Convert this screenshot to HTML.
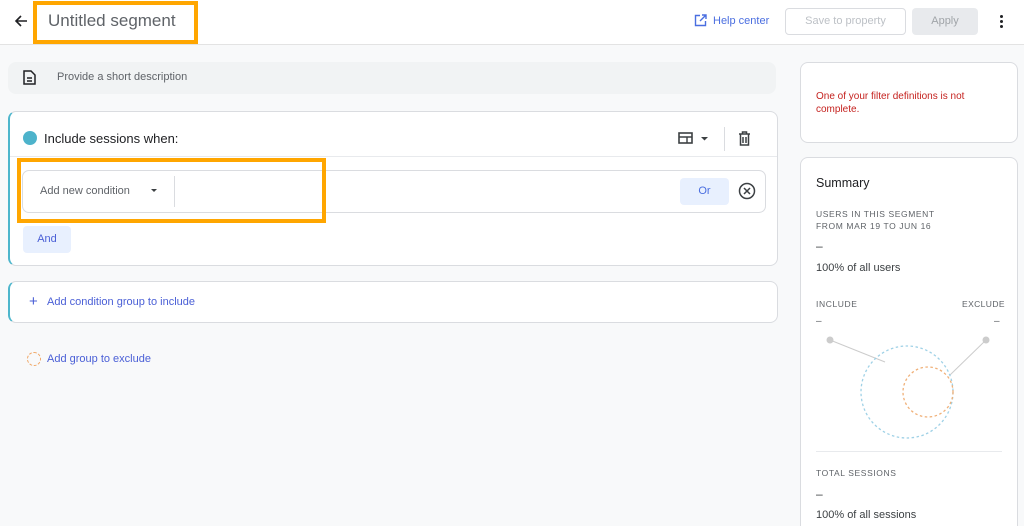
<!DOCTYPE html>
<html><head><meta charset="utf-8"><style>
*{box-sizing:border-box;margin:0;padding:0}
html,body{width:1024px;height:526px;overflow:hidden}
body{background:#f8f9fa;font-family:"Liberation Sans",Arial,sans-serif;position:relative;color:#202124}
.a{position:absolute}
.hdr{left:0;top:0;width:1024px;height:45px;background:#fff;border-bottom:1px solid #e3e3e3}
.card{background:#fff;border:1px solid #dadce0;border-radius:8px}
.lbl{font-size:8.5px;letter-spacing:.6px;color:#5f6368}
.blue{color:#4a5fd6}
</style></head><body>
<div class="a hdr"></div>
<svg class="a" style="left:13px;top:13px" width="16" height="16" viewBox="0 0 16 16"><path d="M14 8H3M8 3L3 8l5 5" stroke="#202124" stroke-width="1.6" fill="none"/></svg>
<div class="a" style="left:33px;top:1px;width:165px;height:43px;border:4px solid #ffa600"></div>
<div class="a" style="left:48px;top:11px;font-size:17px;color:#5f6368">Untitled segment</div>
<svg class="a" style="left:694px;top:14px" width="13" height="13" viewBox="0 0 13 13"><path d="M6 1.5H1.5v10h10V7M8 1h4v4M12 1L6 7" stroke="#4a6ee0" stroke-width="1.4" fill="none"/></svg>
<div class="a blue" style="left:713px;top:15px;font-size:11px;color:#4a6ee0">Help center</div>
<div class="a" style="left:785px;top:8px;width:121px;height:27px;border:1px solid #dadce0;border-radius:4px;background:#fff;font-size:11px;color:#bdc1c6;text-align:center;line-height:25px">Save to property</div>
<div class="a" style="left:912px;top:8px;width:66px;height:27px;border-radius:4px;background:#e8eaed;font-size:11px;color:#a0a4a8;text-align:center;line-height:27px">Apply</div>
<div class="a" style="left:1000px;top:15px;width:3px;height:3px;background:#202124;border-radius:50%;box-shadow:0 5px 0 #202124,0 10px 0 #202124"></div>

<div class="a" style="left:8px;top:62px;width:768px;height:32px;background:#f1f3f4;border-radius:8px"></div>
<svg class="a" style="left:23px;top:70px" width="13" height="15" viewBox="0 0 13 15"><path d="M1 1h7l4 4v9H1z" stroke="#202124" stroke-width="1.5" fill="none"/><path d="M4 8h5M4 11h5" stroke="#202124" stroke-width="1.4"/></svg>
<div class="a" style="left:57px;top:71px;font-size:11px;color:#5f6368">Provide a short description</div>

<div class="a card" style="left:8px;top:111px;width:770px;height:155px;border-left:2px solid #4db6cc"></div>
<div class="a" style="left:23px;top:131px;width:14px;height:14px;border-radius:50%;background:#4db3cb"></div>
<div class="a" style="left:44px;top:131px;font-size:13px;color:#202124">Include sessions when:</div>
<svg class="a" style="left:678px;top:131px" width="34" height="14" viewBox="0 0 34 14"><rect x="1" y="2" width="13" height="10" stroke="#3c4043" stroke-width="1.6" fill="none"/><path d="M1 6h13M9 6v6" stroke="#3c4043" stroke-width="1.4"/><path d="M23 6h7l-3.5 3.5z" fill="#3c4043"/></svg>
<div class="a" style="left:724px;top:127px;width:1px;height:24px;background:#dadce0"></div>
<svg class="a" style="left:738px;top:131px" width="13" height="15" viewBox="0 0 13 15"><path d="M1 3h11M4.5 3V1h4v2M2.5 3v11h8V3M5 6v6M8 6v6" stroke="#3c4043" stroke-width="1.5" fill="none"/></svg>
<div class="a" style="left:10px;top:156px;width:767px;height:1px;background:#e8eaed"></div>
<div class="a" style="left:22px;top:170px;width:744px;height:43px;border:1px solid #dadce0;border-radius:7px;background:#fff"></div>
<div class="a" style="left:40px;top:185px;font-size:11px;color:#5f6368">Add new condition</div>
<div class="a" style="left:151px;top:189px;border-left:3.5px solid transparent;border-right:3.5px solid transparent;border-top:3.5px solid #3c4043"></div>
<div class="a" style="left:174px;top:176px;width:1px;height:31px;background:#dadce0"></div>
<div class="a" style="left:680px;top:178px;width:49px;height:27px;background:#e8f0fe;border-radius:4px;font-size:11px;color:#4a6ee0;text-align:center;line-height:27px">Or</div>
<svg class="a" style="left:738px;top:182px" width="18" height="18" viewBox="0 0 18 18"><circle cx="9" cy="9" r="7.5" stroke="#3c4043" stroke-width="1.5" fill="none"/><path d="M6 6l6 6M12 6l-6 6" stroke="#3c4043" stroke-width="1.5"/></svg>
<div class="a" style="left:17px;top:158px;width:309px;height:65px;border:4px solid #ffa600"></div>
<div class="a" style="left:23px;top:226px;width:48px;height:27px;background:#e8f0fe;border-radius:4px;font-size:11px;color:#4a5fd6;text-align:center;line-height:27px">And</div>

<div class="a card" style="left:8px;top:281px;width:770px;height:42px;border-left:2px solid #4db6cc"></div>
<div class="a blue" style="left:29px;top:293px;font-size:15px">+</div>
<div class="a blue" style="left:47px;top:296px;font-size:11px">Add condition group to include</div>
<div class="a" style="left:27px;top:352px;width:14px;height:14px;border-radius:50%;border:1px dashed #f0a868"></div>
<div class="a blue" style="left:47px;top:353px;font-size:11px">Add group to exclude</div>

<div class="a card" style="left:800px;top:62px;width:218px;height:81px"></div>
<div class="a" style="left:816px;top:90px;font-size:10px;line-height:13px;color:#c5221f;width:180px">One of your filter definitions is not complete.</div>
<div class="a card" style="left:800px;top:157px;width:218px;height:380px"></div>
<div class="a" style="left:816px;top:176px;font-size:12.5px">Summary</div>
<div class="a lbl" style="left:816px;top:208px;line-height:12px">USERS IN THIS SEGMENT<br>FROM MAR 19 TO JUN 16</div>
<div class="a" style="left:816px;top:239px;font-size:12px;color:#3c4043">–</div>
<div class="a" style="left:816px;top:262px;font-size:11px;color:#3c4043">100% of all users</div>
<div class="a lbl" style="left:816px;top:299px">INCLUDE</div>
<div class="a lbl" style="left:962px;top:299px;letter-spacing:.4px">EXCLUDE</div>
<div class="a" style="left:816px;top:316px;font-size:10px;color:#5f6368">–</div>
<div class="a" style="left:994px;top:316px;font-size:10px;color:#5f6368">–</div>
<svg class="a" style="left:800px;top:320px" width="218" height="130" viewBox="0 0 218 130"><line x1="30" y1="20" x2="85" y2="42" stroke="#ccc"/><line x1="186" y1="20" x2="150" y2="55" stroke="#ccc"/><circle cx="30" cy="20" r="3.5" fill="#ccc"/><circle cx="186" cy="20" r="3.5" fill="#ccc"/><circle cx="107" cy="72" r="46" stroke="#9fd1e6" stroke-width="1.3" stroke-dasharray="2.5 2.5" fill="none"/><circle cx="128" cy="72" r="25" stroke="#f0b078" stroke-width="1.3" stroke-dasharray="2.5 2.5" fill="none"/></svg>
<div class="a" style="left:816px;top:451px;width:186px;height:1px;background:#e8eaed"></div>
<div class="a lbl" style="left:816px;top:468px">TOTAL SESSIONS</div>
<div class="a" style="left:816px;top:487px;font-size:12px;color:#3c4043">–</div>
<div class="a" style="left:816px;top:509px;font-size:11px;color:#3c4043">100% of all sessions</div>
</body></html>
